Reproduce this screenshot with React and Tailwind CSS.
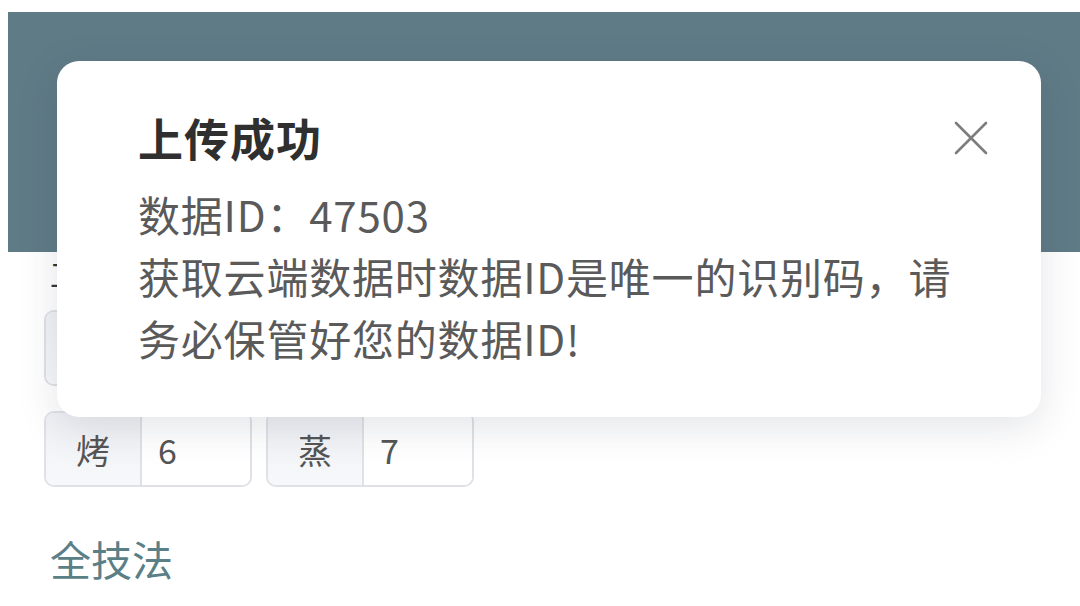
import React from "react";

const FONT = { fontFamily: '"Noto Sans CJK SC", "Noto Sans", sans-serif' };

// first row sits under the dialog, only its left edge shows
const rowOne = ["a", "b", "c", "d"];

const rowTwo = [
	{ label: "烤", value: "6" },
	{ label: "蒸", value: "7" },
];

const InputGroup = ({ label, value }) => {
	return (
		<div className="flex h-[76px] w-[208px] overflow-hidden rounded-[10px] border-2 border-[#dfe1e6]">
			<div className="flex w-[96px] items-center justify-center border-r-2 border-[#dfe1e6] bg-gradient-to-b from-[#eff1f5] to-[#f7f8fa] text-[34px] text-[#555]">
				{label}
			</div>
			<div className="flex flex-1 items-center bg-white pl-[16px] text-[34px] text-[#555]">
				{value}
			</div>
		</div>
	);
};

const CloseIcon = () => (
	<svg width="34" height="34" viewBox="0 0 34 34" fill="none">
		<path
			d="M2 2L32 32M32 2L2 32"
			stroke="#7d7d7d"
			strokeWidth="2.6"
			strokeLinecap="round"
		/>
	</svg>
);

const App = () => {
	return (
		<div
			className="relative h-[606px] w-[1080px] overflow-hidden bg-white"
			style={FONT}
		>
			{/* page */}
			<div className="pl-[8px] pt-[12px]">
				<div className="h-[240px] bg-[#5f7b86]" />
			</div>
			<div className="px-[44px]">
				<div className="mt-[4px] pl-[6px] text-[30px] leading-[34px] text-[#333]">
					工序
				</div>
				<div className="mt-[20px] flex gap-[14px]">
					{rowOne.map((key) => (
						<InputGroup key={key} />
					))}
				</div>
				<div className="mt-[25px] flex gap-[14px]">
					{rowTwo.map((item) => (
						<InputGroup key={item.label} {...item} />
					))}
				</div>
				<div className="mt-[43px] pl-[6px] text-[41px] leading-[56px] text-[#5a7f87]">
					全技法
				</div>
			</div>

			{/* upload result dialog */}
			<div className="absolute left-[57px] top-[61px] h-[356px] w-[984px] rounded-[22px] bg-white pl-[81px] pr-[50px] pt-[48px] shadow-[0_10px_40px_rgba(40,50,70,0.13)]">
				<div className="flex items-center justify-between">
					<h2 className="text-[45px] font-bold leading-[58px] tracking-[1px] text-[#2f2f2f]">
						上传成功
					</h2>
					<button className="flex h-[40px] w-[40px] items-center justify-center">
						<CloseIcon />
					</button>
				</div>
				<div className="mt-[16px] w-[830px] text-[42px] leading-[62px] tracking-[0.8px] text-[#5a5a5a]">
					<p>数据ID：47503</p>
					<p>获取云端数据时数据ID是唯一的识别码，请务必保管好您的数据ID!</p>
				</div>
			</div>
		</div>
	);
};

export default App;
